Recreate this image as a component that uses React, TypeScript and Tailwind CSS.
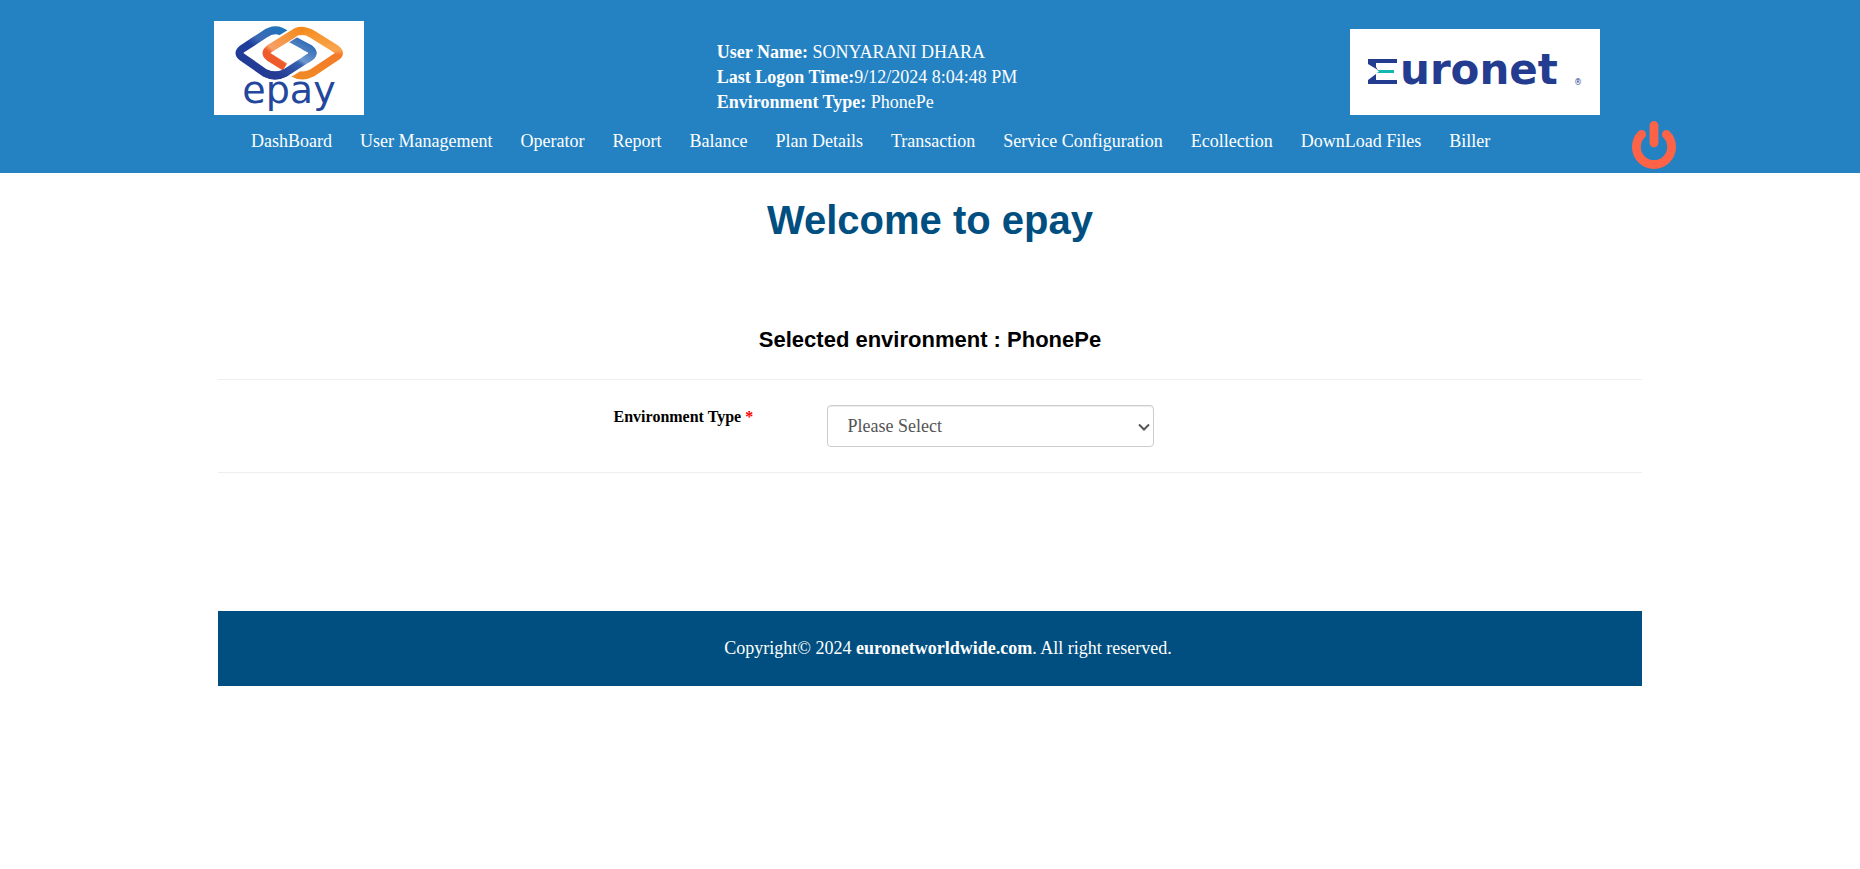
import React from "react";

const NAV_ITEMS = [
  "DashBoard",
  "User Management",
  "Operator",
  "Report",
  "Balance",
  "Plan Details",
  "Transaction",
  "Service Configuration",
  "Ecollection",
  "DownLoad Files",
  "Biller",
];

function EpayLogo() {
  return (
    <svg viewBox="0 0 150 94" className="h-[94px] w-[150px] bg-white" role="img" aria-label="epay">
      <defs>
        <linearGradient id="blueRing" gradientUnits="userSpaceOnUse" x1="70" y1="6" x2="40" y2="56">
          <stop offset="0" stopColor="#1c76bd" />
          <stop offset="0.4" stopColor="#3c68b4" />
          <stop offset="0.55" stopColor="#1f3d9c" />
          <stop offset="1" stopColor="#243a92" />
        </linearGradient>
        <linearGradient id="blueFront" gradientUnits="userSpaceOnUse" x1="92" y1="18" x2="68" y2="56">
          <stop offset="0" stopColor="#2a66b2" />
          <stop offset="0.45" stopColor="#6f98d0" />
          <stop offset="0.55" stopColor="#3460ae" />
          <stop offset="1" stopColor="#263c94" />
        </linearGradient>
        <linearGradient id="orangeRing" gradientUnits="userSpaceOnUse" x1="88" y1="6" x2="88" y2="57">
          <stop offset="0" stopColor="#f58a1a" />
          <stop offset="0.45" stopColor="#f9a650" />
          <stop offset="0.55" stopColor="#f47a2a" />
          <stop offset="1" stopColor="#f08a24" />
        </linearGradient>
        <linearGradient id="orangeLeft" gradientUnits="userSpaceOnUse" x1="88" y1="8" x2="58" y2="46">
          <stop offset="0" stopColor="#f58a1a" />
          <stop offset="0.7" stopColor="#f7a066" />
          <stop offset="0.8" stopColor="#ee5a2a" />
          <stop offset="1" stopColor="#ee5a2a" />
        </linearGradient>
      </defs>
      <g fill="none" strokeLinejoin="round" strokeWidth="8">
        <path d="M73 14 Q62 5 51 13 L28 28 Q23 32 28 36 L51 52 Q61 57 71 52" stroke="url(#blueRing)" />
        <path d="M77 51 L79 52 Q88 57 98 52 L122 36 Q128 32 122 28 L98 13 Q88 7 79 13" stroke="url(#orangeRing)" />
        <path d="M74 16 L96 28 Q101 32 96 36 L71 52" stroke="url(#blueFront)" />
        <path d="M83 10 L55 27 Q49 32 55 37 L71 46" stroke="#fff" strokeWidth="11" />
        <path d="M90 10 Q84 9 79 13 L55 28 Q50 32 55 36 L71 46" stroke="url(#orangeLeft)" />
        <path d="M92 40 L73 52" stroke="#fff" strokeWidth="11" />
        <path d="M90 25 L96 28 Q101 32 96 36 L71 52 Q61 57 51 52" stroke="url(#blueFront)" />
      </g>
      <text x="75" y="82" textAnchor="middle" fontSize="38" fill="#23479c" className="font-['DejaVu_Sans',sans-serif]">
        epay
      </text>
    </svg>
  );
}

function EuronetLogo() {
  return (
    <svg viewBox="0 0 250 86" className="h-[86px] w-[250px] bg-white" role="img" aria-label="Euronet">
      <path d="M18 30H47V34H26V38L28 41L18 35Z" fill="#243c8f" />
      <path d="M18 55H47V51H26V45L18 51Z" fill="#243c8f" />
      <path d="M27 41H44V44H27L29 42.500Z" fill="#14b8b0" />
      <text x="50" y="55" fontSize="42" fontWeight="700" fill="#243c8f" className="font-['DejaVu_Sans',sans-serif]">
        uronet
      </text>
      <text x="224" y="56" fontSize="8" fill="#243c8f" className="font-['DejaVu_Sans',sans-serif]">
        ®
      </text>
    </svg>
  );
}

function PowerIcon() {
  return (
    <svg viewBox="0 0 44 48" className="h-12 w-11" fill="none" stroke="#ff6347" strokeWidth="8.800" strokeLinecap="round" aria-hidden="true">
      <path d="M9.600 13.400A17.600 17.600 0 1 0 34.400 13.400" />
      <path d="M22 4.500V22" />
    </svg>
  );
}

export default function App() {
  return (
    <div className="bg-white font-['Liberation_Serif',serif] text-lg text-black">
      <header className="bg-[#2482c3] text-white">
        <div className="grid grid-cols-[503fr_633fr_250px] items-end pt-[21px] pr-[14%] pl-[11.5%]">
          <EpayLogo />
          <div className="leading-[25px]">
            <p><b>User Name:</b> SONYARANI DHARA</p>
            <p><b>Last Logon Time:</b>9/12/2024 8:04:48 PM</p>
            <p><b>Environment Type:</b> PhonePe</p>
          </div>
          <EuronetLogo />
        </div>
        <div className="flex items-start justify-between pr-[9.9%] pb-1 pl-[13.5%]">
          <nav className="flex gap-7 pt-3 whitespace-nowrap">
            {NAV_ITEMS.map((item) => (
              <a key={item} href="#">{item}</a>
            ))}
          </nav>
          <button type="button" aria-label="Log out" className="pt-1.5">
            <PowerIcon />
          </button>
        </div>
      </header>

      <main className="px-[11.7%]">
        <h1 className="pt-6 text-center font-['Liberation_Sans',sans-serif] text-[40px] leading-[46px] font-bold text-[#004f80]">
          Welcome to epay
        </h1>
        <h2 className="mt-20 text-center font-['Liberation_Sans',sans-serif] text-[22px] leading-[34px] font-bold">
          Selected environment : PhonePe
        </h2>
        <form className="mt-[22px] grid grid-cols-[396fr_213fr_328fr_488fr] items-start border-y border-[#eee] py-[25px]">
          <label htmlFor="environment" className="col-start-2 text-base leading-6 font-bold">
            Environment Type <span className="text-[#f00]">*</span>
          </label>
          <div className="relative">
            <select
              id="environment"
              className="h-[42px] w-full appearance-none rounded border border-[#ccc] bg-white px-5 text-lg text-[#555] shadow-[inset_0_1px_1px_rgba(0,0,0,0.075)]"
            >
              <option>Please Select</option>
              <option>PhonePe</option>
            </select>
            <svg viewBox="0 0 12 8" className="pointer-events-none absolute top-[18px] right-1 h-2 w-3" fill="none" stroke="#555" strokeWidth="2" aria-hidden="true">
              <path d="M1 1.500L6 6.500L11 1.500" />
            </svg>
          </div>
        </form>
      </main>

      <footer className="mx-[11.7%] mt-[138px] bg-[#004f80] py-6 pl-9 text-center leading-[27px] text-white">
        Copyright© 2024 <b>euronetworldwide.com</b>. All right reserved.
      </footer>
    </div>
  );
}
